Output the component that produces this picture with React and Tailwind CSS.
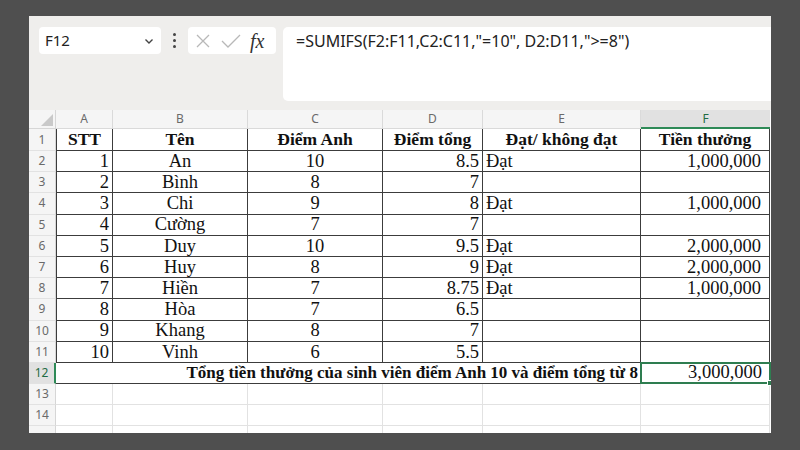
import React from "react";

const COLS = ["A", "B", "C", "D", "E", "F"];

const rows = [
  ["1", "An", "10", "8.5", "Đạt", "1,000,000"],
  ["2", "Bình", "8", "7", "", ""],
  ["3", "Chi", "9", "8", "Đạt", "1,000,000"],
  ["4", "Cường", "7", "7", "", ""],
  ["5", "Duy", "10", "9.5", "Đạt", "2,000,000"],
  ["6", "Huy", "8", "9", "Đạt", "2,000,000"],
  ["7", "Hiền", "7", "8.75", "Đạt", "1,000,000"],
  ["8", "Hòa", "7", "6.5", "", ""],
  ["9", "Khang", "8", "7", "", ""],
  ["10", "Vinh", "6", "5.5", "", ""],
];

const align = ["justify-end", "justify-center", "justify-center", "justify-end", "justify-start", "justify-end !pr-[8px]"];

const serif = { fontFamily: '"Liberation Serif", "Times New Roman", serif' };

const Cell = ({ children, className = "" }) => (
  <div
    className={`flex items-center px-[3px] border-r border-b border-[#3c3c3c] text-[18.5px] text-[#111] leading-none overflow-hidden whitespace-nowrap ${className}`}
    style={serif}
  >
    {children}
  </div>
);

const RowHead = ({ n, active }) => (
  <div
    className={`flex items-center justify-center text-[12px] border-b border-[#e2e2e2] ${
      active
        ? "bg-[#e1e1e1] text-[#1f6b43] border-r-2 border-r-[#2e8a57]"
        : "bg-[#f5f5f5] text-[#6a6a6a] border-r border-r-[#d6d6d6]"
    }`}
  >
    {n}
  </div>
);

const App = () => {
  return (
    <div className="w-[800px] h-[450px] bg-[#4f4f4f] pt-[16px] pl-[29px] overflow-hidden" style={{ fontFamily: '"Noto Sans", "Open Sans", sans-serif' }}>
      <div className="w-[742px] h-[417px] bg-[#efeeec] flex flex-col overflow-hidden">
        {/* Formula bar */}
        <div className="h-[94px] shrink-0 flex items-start pt-[11px] pl-[10px]">
          <div className="w-[122px] h-[27px] bg-white rounded-[4px] flex items-center justify-between pl-[6px] pr-[6px]">
            <span className="text-[15px] text-[#222]">F12</span>
            <svg width="12" height="12" viewBox="0 0 12 12" fill="none" stroke="#444" strokeWidth="1.4">
              <path d="M2.5 4.5 L6 8 L9.5 4.5" />
            </svg>
          </div>
          <div className="w-[22px] ml-[2px] h-[27px] flex flex-col items-center justify-center gap-[3px]">
            <span className="w-[3px] h-[3px] rounded-full bg-[#444]" />
            <span className="w-[3px] h-[3px] rounded-full bg-[#444]" />
            <span className="w-[3px] h-[3px] rounded-full bg-[#444]" />
          </div>
          <div className="w-[88px] ml-[3px] h-[27px] bg-white rounded-[4px] flex items-center pl-[6px] gap-[8px]">
            <svg width="18" height="18" viewBox="0 0 18 18" fill="none" stroke="#b8b8b8" strokeWidth="1.3">
              <path d="M3 3 L15 15 M15 3 L3 15" />
            </svg>
            <svg width="22" height="18" viewBox="0 0 22 18" fill="none" stroke="#b8b8b8" strokeWidth="1.3">
              <path d="M2 9 L8 15 L20 3" />
            </svg>
            <span className="text-[20px] italic text-[#333] leading-none" style={serif}>
              fx
            </span>
          </div>
          <div className="flex-1 h-[74px] bg-white rounded-l-[5px] ml-[7px] pl-[13px] pt-[2px]">
            <span className="text-[16px] text-[#222]">=SUMIFS(F2:F11,C2:C11,"=10", D2:D11,"&gt;=8")</span>
          </div>
        </div>

        {/* Sheet */}
        <div className="bg-white flex-1">
          <div className="grid grid-cols-[27px_57px_135px_135px_100px_158px_129px] grid-rows-[19px_22px_repeat(13,21.2px)_10px]">
            {/* column headers */}
            <div className="bg-[#f5f5f5] border-r border-b border-[#d6d6d6] relative">
              <div className="absolute right-[2px] bottom-[2px] w-0 h-0 border-l-[12px] border-l-transparent border-b-[12px] border-b-[#c9c9c9]" />
            </div>
            {COLS.map((c) =>
              c === "F" ? (
                <div key={c} className="bg-[#e1e1e1] border-b-2 border-[#2e8a57] flex items-center justify-center text-[12px] text-[#1f6b43]">
                  {c}
                </div>
              ) : (
                <div key={c} className="bg-[#f5f5f5] border-r border-b border-[#dadada] flex items-center justify-center text-[12px] text-[#6a6a6a]">
                  {c}
                </div>
              )
            )}

            {/* row 1 */}
            <RowHead n={1} />
            {["STT", "Tên", "Điểm Anh", "Điểm tổng", "Đạt/ không đạt", "Tiền thưởng"].map((h, i) => (
              <Cell key={h} className={`justify-center font-bold !text-[17.5px] ${i === 0 ? "border-l" : ""}`}>
                {h}
              </Cell>
            ))}

            {rows.map((r, ri) => (
              <React.Fragment key={ri}>
                <RowHead n={ri + 2} />
                {r.map((v, ci) => (
                  <Cell key={ci} className={`${align[ci]} ${ci === 0 ? "border-l" : ""}`}>
                    {v}
                  </Cell>
                ))}
              </React.Fragment>
            ))}

            {/* row 12 */}
            <RowHead n={12} active />
            <Cell className="col-span-5 justify-end font-bold !text-[17px] pr-[2px]">
              Tổng tiền thưởng của sinh viên điểm Anh 10 và điểm tổng từ 8
            </Cell>
            <div className="relative flex items-center justify-end pr-[8px] text-[18.5px] text-[#111] border-b border-[#3c3c3c]" style={serif}>
              3,000,000
              <div className="absolute -inset-[1px] border-2 border-[#2e7d50] pointer-events-none" />
              <div className="absolute -right-[3px] -bottom-[3px] w-[6px] h-[6px] bg-[#2e7d50] border border-white" />
            </div>

            {/* rows 13-14 + partial */}
            {[13, 14, ""].map((n) => (
              <React.Fragment key={`e${n}`}>
                <RowHead n={n} />
                {COLS.map((c) => (
                  <div key={c} className="border-r border-b border-[#e2e2e2]" />
                ))}
              </React.Fragment>
            ))}
          </div>
        </div>
      </div>
    </div>
  );
};

export default App;
